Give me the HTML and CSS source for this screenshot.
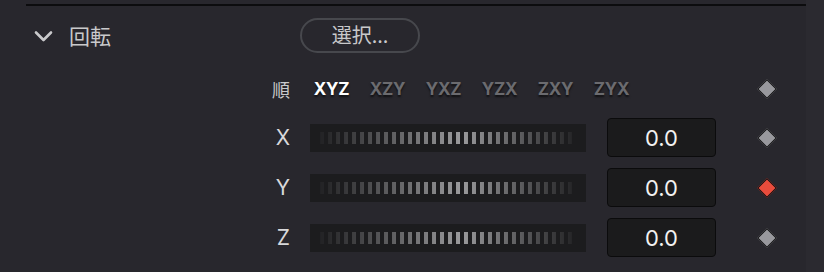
FILE: index.html
```html
<!DOCTYPE html>
<html lang="ja">
<head>
<meta charset="utf-8">
<link rel="stylesheet" href="styles.css">
</head>
<body>
<div class="frame">
  <div class="panel">
    <div class="rule"></div>
    <div class="header">
      <svg class="chevron" width="19" height="13" viewBox="0 0 19 13"><path d="M2 2.5 L9.5 10 L17 2.5" fill="none" stroke="#c9c9cb" stroke-width="2.6" stroke-linecap="round" stroke-linejoin="round"/></svg>
      <span class="title">回転</span>
      <button class="select">選択...</button>
    </div>
    <div class="order">
      <span class="label">順</span>
      <div class="opts">
        <span class="opt on">XYZ</span>
        <span class="opt">XZY</span>
        <span class="opt">YXZ</span>
        <span class="opt">YZX</span>
        <span class="opt">ZXY</span>
        <span class="opt">ZYX</span>
      </div>
      <span class="key"></span>
    </div>
    <div class="param">
      <span class="label">X</span>
      <div class="track"><div class="ticks"></div></div>
      <div class="value">0.0</div>
      <span class="key"></span>
    </div>
    <div class="param">
      <span class="label">Y</span>
      <div class="track"><div class="ticks"></div></div>
      <div class="value">0.0</div>
      <span class="key red"></span>
    </div>
    <div class="param">
      <span class="label">Z</span>
      <div class="track"><div class="ticks"></div></div>
      <div class="value">0.0</div>
      <span class="key"></span>
    </div>
  </div>
  <div class="strip"></div>
</div>
</body>
</html>
```
FILE: styles.css
```css
html, body {
  margin: 0;
  padding: 0;
  background: #28272d;
  width: 824px;
  height: 272px;
  overflow: hidden;
  font-family: Inter, "Noto Sans CJK JP", sans-serif;
}
.frame {
  display: flex;
  height: 272px;
}
.panel {
  width: 806px;
  display: flex;
  flex-direction: column;
}
.strip {
  width: 18px;
  background: #2b2a30;
}
.rule {
  margin: 4px 0 0 26px;
  height: 2px;
  background: #0c0c0e;
}
.header {
  margin-top: 12px;
  height: 35px;
  display: flex;
  align-items: center;
}
.chevron {
  margin-left: 34px;
  margin-top: 1px;
}
.title {
  margin-left: 16px;
  margin-top: -2px;
  font-family: "Noto Sans CJK JP", sans-serif;
  font-size: 21px;
  color: #c9c9cb;
  width: 231px;
}
.select {
  width: 120px;
  height: 35px;
  border: 2px solid #47484d;
  border-radius: 18px;
  background: transparent;
  color: #c9c9cb;
  font-family: "Noto Sans CJK JP", sans-serif;
  font-size: 20px;
  padding: 0 0 2px 0;
  line-height: 1;
}
.order {
  margin-top: 19px;
  height: 34px;
  display: flex;
  align-items: center;
}
.label {
  width: 290px;
  text-align: right;
  color: #d8d8da;
  font-size: 21px;
}
.order .label {
  font-family: "Noto Sans CJK JP", sans-serif;
  font-size: 18px;
  color: #c9c9cb;
}
.opts {
  display: flex;
  gap: 19px;
  margin-left: 23px;
}
.opt {
  width: 37px;
  text-align: center;
  font-size: 17px;
  font-weight: 700;
  color: #6b6b6f;
  text-shadow: 0 2px 2px rgba(0,0,0,0.6);
  letter-spacing: -0.2px;
}
.opt.on {
  color: #ffffff;
}
.key {
  margin-left: auto;
  margin-right: 32px;
  width: 12px;
  height: 12px;
  transform: rotate(45deg);
  background: #98989d;
  border: 1.5px solid #121214;
}
.key.red {
  background: #e94c3c;
}
.param {
  margin-top: 11px;
  height: 39px;
  display: flex;
  align-items: center;
}
.order + .param {
  margin-top: 12px;
}
.track {
  margin-left: 20px;
  width: 276px;
  height: 28px;
  background: #1c1c1e;
  display: flex;
  align-items: center;
}
.ticks {
  margin-left: 10px;
  width: 256px;
  height: 12px;
  background: repeating-linear-gradient(90deg, #9a9a9c 0 4px, transparent 4px 8px);
  -webkit-mask-image: linear-gradient(90deg, rgba(0,0,0,0.05), rgba(0,0,0,1) 55%, rgba(0,0,0,0.05));
  mask-image: linear-gradient(90deg, rgba(0,0,0,0.05), rgba(0,0,0,1) 55%, rgba(0,0,0,0.05));
}
.value {
  margin-left: 21px;
  width: 109px;
  height: 39px;
  box-sizing: border-box;
  background: #1b1b1c;
  border: 1px solid #0b0b0c;
  border-radius: 4px;
  color: #f2f2f2;
  font-size: 22px;
  display: flex;
  align-items: center;
  justify-content: center;
}
```
